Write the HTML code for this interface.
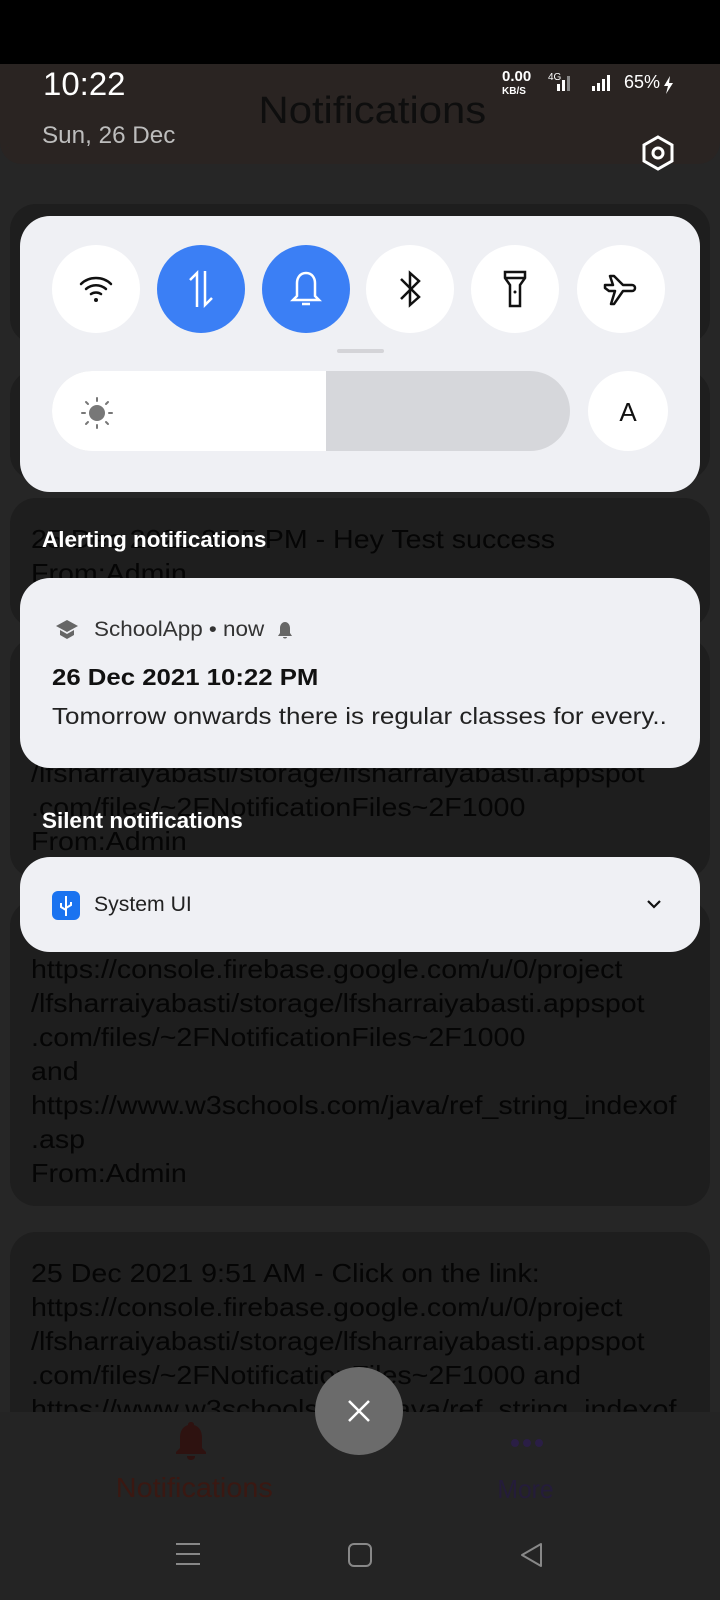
<!DOCTYPE html>
<html><head><meta charset="utf-8"><style>
*{margin:0;padding:0;box-sizing:border-box}
body{width:720px;height:1600px;background:#262626;position:relative;overflow:hidden;font-family:"Liberation Sans",sans-serif}
.a{position:absolute}
.t{position:absolute;white-space:nowrap;transform-origin:left center}
.bgc{position:absolute;left:10px;width:700px;background:#1e1e1e;border-radius:26px}
.bt{position:absolute;left:31px;font-size:26px;color:#050505;line-height:34px;white-space:nowrap;transform-origin:left top;transform:scaleX(1.1)}
.tile{position:absolute;top:245px;width:88px;height:88px;border-radius:50%;background:#fff;display:flex;align-items:center;justify-content:center}
.blue{background:#3b7ff5}
</style></head><body>
<div class="a" style="left:0;top:0;width:720px;height:64px;background:#000"></div>
<div class="a" style="left:0;top:64px;width:720px;height:100px;background:#2a2422;border-radius:0 0 22px 22px"></div>
<div class="t" style="left:362px;top:90px;font-size:38px;color:#0e0e0e;transform:translateX(-50%) scaleX(1.1)">Notifications</div>
<div class="t" style="left:43px;top:66px;font-size:32px;color:#fff;transform:scaleX(1.03)">10:22</div>
<div class="t" style="left:42px;top:122px;font-size:24px;color:#bdbdbd;transform:scaleX(1.01)">Sun, 26 Dec</div>
<div class="t" style="left:502px;top:70px;font-size:15px;color:#fff;font-weight:bold;line-height:13px">0.00<br><span style="font-size:10px">KB/S</span></div>
<div class="t" style="left:548px;top:72px;font-size:10px;color:#fff">4G</div>
<svg class="a" style="left:553px;top:72px" width="130" height="24" viewBox="0 0 130 24"><g fill="#fff"><rect x="4" y="12" width="3" height="7"/><rect x="9" y="8" width="3" height="11"/><rect x="14" y="4" width="3" height="15" fill="#888"/><rect x="39" y="14" width="3" height="5"/><rect x="44" y="11" width="3" height="8"/><rect x="49" y="7" width="3" height="12"/><rect x="54" y="3" width="3" height="16"/><path d="M117 4l-6 10h4l-2 8 7-11h-4z"/></g></svg>
<div class="t" style="left:624px;top:72px;font-size:18px;color:#fff">65%</div>
<svg class="a" style="left:640px;top:134px" width="36" height="38" viewBox="0 0 36 38"><path d="M18 3l14 8v16l-14 8-14-8V11z" fill="none" stroke="#fff" stroke-width="3"/><circle cx="18" cy="19" r="5" fill="none" stroke="#fff" stroke-width="3"/></svg>

<div class="bgc" style="top:204px;height:140px"></div>
<div class="bgc" style="top:370px;height:110px"></div>
<div class="bgc" style="top:498px;height:130px"></div>
<div class="bt" style="top:522px">25 Dec 2021 8:55 PM - Hey Test success<br>From:Admin</div>
<div class="bgc" style="top:638px;height:240px"></div>
<div class="bt" style="top:722px">https://console.firebase.google.com/u/0/project<br>/lfsharraiyabasti/storage/lfsharraiyabasti.appspot<br>.com/files/~2FNotificationFiles~2F1000<br>From:Admin</div>
<div class="bgc" style="top:900px;height:306px"></div>
<div class="bt" style="top:952px">https://console.firebase.google.com/u/0/project<br>/lfsharraiyabasti/storage/lfsharraiyabasti.appspot<br>.com/files/~2FNotificationFiles~2F1000<br>and<br>https://www.w3schools.com/java/ref_string_indexof<br>.asp<br>From:Admin</div>
<div class="bgc" style="top:1232px;height:250px"></div>
<div class="bt" style="top:1256px">25 Dec 2021 9:51 AM - Click on the link:<br>https://console.firebase.google.com/u/0/project<br>/lfsharraiyabasti/storage/lfsharraiyabasti.appspot<br>.com/files/~2FNotificationFiles~2F1000 and<br>https://www.w3schools.com/java/ref_string_indexof</div>

<div class="a" style="left:0;top:1412px;width:720px;height:188px;background:#242424"></div>
<svg class="a" style="left:174px;top:1420px" width="34" height="42" viewBox="0 0 34 42"><path d="M17 2c-2 0-3 1-3 3-6 2-8 7-8 13v10l-4 4v2h30v-2l-4-4V18c0-6-2-11-8-13 0-2-1-3-3-3zM13 36h8c0 3-2 4-4 4s-4-1-4-4z" fill="#2e1210"/></svg>
<div class="t" style="left:192px;top:1472px;font-size:28px;color:#3a1812;transform:translateX(-50%) scaleX(1.03)">Notifications</div>
<svg class="a" style="left:510px;top:1438px" width="34" height="10"><circle cx="5" cy="5" r="4" fill="#2a1e45"/><circle cx="17" cy="5" r="4" fill="#2a1e45"/><circle cx="29" cy="5" r="4" fill="#2a1e45"/></svg>
<div class="t" style="left:527px;top:1474px;font-size:26px;color:#241c3a;transform:translateX(-50%) scaleX(.95)">More</div>
<div class="a" style="left:315px;top:1367px;width:88px;height:88px;border-radius:50%;background:#6b6b6b"></div>
<svg class="a" style="left:347px;top:1399px" width="24" height="24"><path d="M2 2l20 20M22 2L2 22" stroke="#fff" stroke-width="2.5"/></svg>
<svg class="a" style="left:174px;top:1540px" width="28" height="28"><path d="M2 4h24M2 14h24M2 24h24" stroke="#888" stroke-width="2"/></svg>
<svg class="a" style="left:347px;top:1542px" width="26" height="26"><rect x="2" y="2" width="22" height="22" rx="5" fill="none" stroke="#888" stroke-width="2"/></svg>
<svg class="a" style="left:519px;top:1542px" width="26" height="26"><path d="M22 2v22L3 13z" fill="none" stroke="#888" stroke-width="2" stroke-linejoin="round"/></svg>

<div class="a" style="left:20px;top:216px;width:680px;height:276px;background:#eff0f4;border-radius:30px"></div>
<div class="tile" style="left:52px"><svg width="36" height="32" viewBox="0 0 36 32"><path d="M3 11c8-8 22-8 30 0M8 16c6-5 14-5 20 0M13 21c3-2 7-2 10 0" fill="none" stroke="#111" stroke-width="2.5" stroke-linecap="round"/><circle cx="18" cy="27" r="2" fill="#111"/></svg></div>
<div class="tile blue" style="left:157px"><svg width="34" height="40" viewBox="0 0 34 40"><path d="M13 38V4L6 11M21 2v34l7-7" fill="none" stroke="#fff" stroke-width="2.5"/></svg></div>
<div class="tile blue" style="left:262px"><svg width="32" height="38" viewBox="0 0 32 38"><path d="M16 3c-6 0-9 5-9 10v13l-4 4h26l-4-4V13c0-5-3-10-9-10zM12 34h8" fill="none" stroke="#fff" stroke-width="2.5"/></svg></div>
<div class="tile" style="left:366px"><svg width="30" height="40" viewBox="0 0 30 40"><path d="M6 10l18 18-9 8V4l9 8L6 30" fill="none" stroke="#111" stroke-width="2.5"/></svg></div>
<div class="tile" style="left:471px"><svg width="30" height="40" viewBox="0 0 30 40"><path d="M5 3h20v6l-5 7v21H10V16L5 9zM5 9h20" fill="none" stroke="#111" stroke-width="2.5"/><circle cx="15" cy="23" r="1.5" fill="#111"/></svg></div>
<div class="tile" style="left:577px"><svg width="40" height="40" viewBox="0 0 40 40"><path d="M4 16h8l-3-9h4l9 9h9c4 0 4 6 0 6h-9l-9 13h-3l4-13H8l-4-3z" fill="none" stroke="#111" stroke-width="2.5" stroke-linejoin="round"/></svg></div>
<div class="a" style="left:337px;top:349px;width:47px;height:4px;background:#d4d4d8;border-radius:2px"></div>
<div class="a" style="left:52px;top:371px;width:518px;height:80px;border-radius:40px;background:#d6d7db;overflow:hidden"><div style="width:274px;height:80px;background:#fff"></div></div>
<svg class="a" style="left:80px;top:396px" width="34" height="34" viewBox="0 0 34 34"><circle cx="17" cy="17" r="8" fill="#777"/><g stroke="#777" stroke-width="2" stroke-linecap="round"><path d="M17 2v3M17 29v3M2 17h3M29 17h3M6 6l2 2M26 26l2 2M6 28l2-2M26 8l2-2"/></g></svg>
<div class="a" style="left:588px;top:371px;width:80px;height:80px;border-radius:50%;background:#fff"></div>
<div class="t" style="left:628px;top:397px;font-size:26px;color:#111;transform:translateX(-50%)">A</div>

<div class="t" style="left:42px;top:527px;font-size:22px;color:#fff;font-weight:bold;transform:scaleX(1.02)">Alerting notifications</div>
<div class="a" style="left:20px;top:578px;width:680px;height:190px;background:#eff0f4;border-radius:30px"></div>
<svg class="a" style="left:54px;top:618px" width="26" height="24" viewBox="0 0 26 24"><path d="M13 2L2 8l11 6 11-6zM6 12v5l7 4 7-4v-5l-7 4z" fill="#666"/></svg>
<div class="t" style="left:94px;top:618px;font-size:21px;color:#333;transform:scaleX(1.07)">SchoolApp • now</div>
<svg class="a" style="left:276px;top:620px" width="18" height="20" viewBox="0 0 18 20"><path d="M9 2c-3 0-5 3-5 6v5l-2 3h14l-2-3V8c0-3-2-6-5-6zM7 17h4c0 2-4 2-4 0z" fill="#666"/></svg>
<div class="t" style="left:52px;top:664px;font-size:23px;color:#111;font-weight:bold;transform:scaleX(1.12)">26 Dec 2021 10:22 PM</div>
<div class="t" style="left:52px;top:703px;font-size:23px;color:#222;transform:scaleX(1.13)">Tomorrow onwards there is regular classes for every..</div>

<div class="t" style="left:42px;top:808px;font-size:22px;color:#fff;font-weight:bold;transform:scaleX(1.02)">Silent notifications</div>
<div class="a" style="left:20px;top:857px;width:680px;height:95px;background:#eff0f4;border-radius:30px"></div>
<div class="a" style="left:52px;top:891px;width:28px;height:29px;border-radius:6px;background:#1a73f0"></div>
<svg class="a" style="left:58px;top:895px" width="16" height="22" viewBox="0 0 16 22"><path d="M8 1v20M3 8v4l5 3M13 7v3l-5 3" fill="none" stroke="#fff" stroke-width="2"/></svg>
<div class="t" style="left:94px;top:893px;font-size:21px;color:#222;transform:scaleX(1.01)">System UI</div>
<svg class="a" style="left:646px;top:898px" width="16" height="12"><path d="M2 3l6 6 6-6" fill="none" stroke="#111" stroke-width="2.2"/></svg>
</body></html>
